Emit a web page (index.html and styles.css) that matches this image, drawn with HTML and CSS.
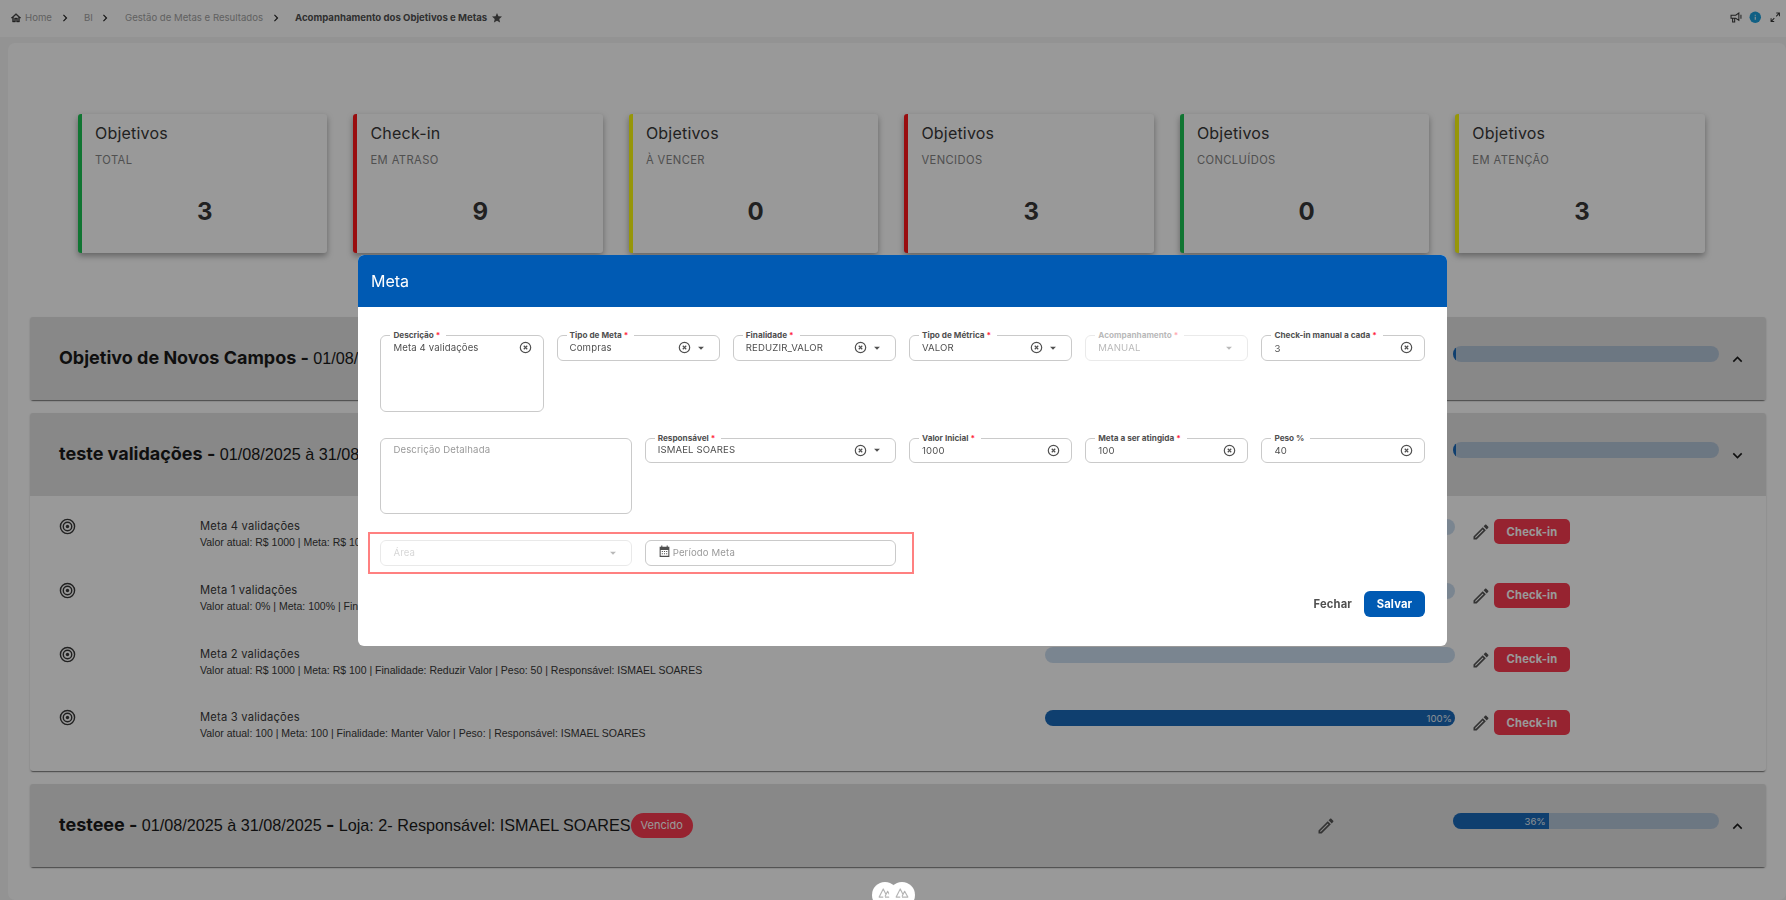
FILE: index.html
```html
<!DOCTYPE html>
<html lang="pt-BR">
<head>
  <meta charset="UTF-8">
  <meta name="viewport" content="width=device-width, initial-scale=1.0">
  <title>Acompanhamento dos Objetivos e Metas</title>
  <link rel="stylesheet" href="styles.css">
</head>
<body>
  <svg class="sprite">
    <symbol id="home" viewBox="0 0 24 24"><path d="M12 5.69L17 10.19V18H15V12H9V18H7V10.19L12 5.69M12 3L2 12H5V20H11V14H13V20H19V12H22L12 3Z" stroke="currentColor" stroke-width="0.8"/></symbol>
    <symbol id="right" viewBox="0 0 24 24"><path d="M8.59 16.58L13.17 12L8.59 7.41L10 6L16 12L10 18Z"/></symbol>
    <symbol id="up" viewBox="0 0 24 24"><path d="M7.41 15.41L12 10.83L16.59 15.41L18 14L12 8L6 14Z"/></symbol>
    <symbol id="down" viewBox="0 0 24 24"><path d="M7.41 8.58L12 13.17L16.59 8.58L18 10L12 16L6 10Z"/></symbol>
    <symbol id="star" viewBox="0 0 24 24"><path d="M12 17.27L18.18 21L16.54 13.97L22 9.24L14.81 8.62L12 2L9.19 8.62L2 9.24L7.45 13.97L5.82 21Z"/></symbol>
    <symbol id="bullhorn" viewBox="0 0 24 24"><path fill="none" stroke="currentColor" stroke-width="2" d="M2 8H11L17 4V18L11 14H2ZM5 14V21H9V14M21 7V15"/></symbol>
    <symbol id="info" viewBox="0 0 24 24"><circle cx="12" cy="12" r="11"/><path fill="#fff" d="M11 7H13V9H11ZM11 11H13V17H11Z"/></symbol>
    <symbol id="expand" viewBox="0 0 24 24"><path d="M10 21V19H6.41L10.91 14.5L9.5 13.09L5 17.59V14H3V21H10M14.5 10.91L19 6.41V10H21V3H14V5H17.59L13.09 9.5L14.5 10.91Z"/></symbol>
    <symbol id="pencil" viewBox="0 0 24 24"><path d="M14.06 9L15 9.94L5.92 19H5V18.08L14.06 9M17.66 3C17.41 3 17.15 3.1 16.96 3.29L15.13 5.12L18.88 8.87L20.71 7.04C21.1 6.65 21.1 6 20.71 5.63L18.37 3.29C18.17 3.09 17.92 3 17.66 3M14.06 6.19L3 17.25V21H6.75L17.81 9.94L14.06 6.19Z"/></symbol>
    <symbol id="target" viewBox="0 0 24 24"><g fill="none" stroke="currentColor" stroke-width="2"><circle cx="12" cy="12" r="10"/><circle cx="12" cy="12" r="6"/></g><circle cx="12" cy="12" r="2.4"/></symbol>
    <symbol id="clear" viewBox="0 0 24 24"><g fill="none" stroke="currentColor" stroke-width="2.2"><circle cx="12" cy="12" r="9.6"/><path d="M8.8 8.8L15.2 15.2M15.2 8.8L8.8 15.2"/></g></symbol>
    <symbol id="caret" viewBox="0 0 24 24"><path d="M7 10L12 15L17 10Z"/></symbol>
    <symbol id="calendar" viewBox="0 0 24 24"><path fill-rule="evenodd" d="M6 1H8V3H16V1H18V3H21V22H3V3H6ZM5 9V20H19V9ZM7 11H9V13H7ZM11 11H13V13H11ZM15 11H17V13H15ZM7 15H9V17H7ZM11 15H13V17H11ZM15 15H17V17H15Z"/></symbol>
    <symbol id="nuxt" viewBox="0 0 24 24"><path fill="none" stroke="currentColor" stroke-width="2" stroke-linejoin="round" d="M9 19H2L9 5L14 15M12 19H22L16.5 9L12 18"/></symbol>
  </svg>

  <header class="topbar">
    <nav class="breadcrumb">
      <svg class="icon home"><use href="#home"/></svg>
      <a class="crumb-home">Home</a>
      <svg class="icon sep"><use href="#right"/></svg>
      <a class="crumb-bi">BI</a>
      <svg class="icon sep"><use href="#right"/></svg>
      <a class="crumb-gestao">Gestão de Metas e Resultados</a>
      <svg class="icon sep"><use href="#right"/></svg>
      <strong>Acompanhamento dos Objetivos e Metas</strong>
      <svg class="icon star"><use href="#star"/></svg>
    </nav>
    <div class="tools">
      <svg class="icon"><use href="#bullhorn"/></svg>
      <svg class="icon info"><use href="#info"/></svg>
      <svg class="icon"><use href="#expand"/></svg>
    </div>
  </header>

  <main class="content">
    <section class="cards">
      <div class="card green"><h3>Objetivos</h3><p>TOTAL</p><b>3</b></div>
      <div class="card red"><h3>Check-in</h3><p>EM ATRASO</p><b>9</b></div>
      <div class="card yellow"><h3>Objetivos</h3><p>À VENCER</p><b>0</b></div>
      <div class="card red"><h3>Objetivos</h3><p>VENCIDOS</p><b>3</b></div>
      <div class="card green"><h3>Objetivos</h3><p>CONCLUÍDOS</p><b>0</b></div>
      <div class="card yellow"><h3>Objetivos</h3><p>EM ATENÇÃO</p><b>3</b></div>
    </section>

    <section class="panel">
      <div class="panel-header">
        <div class="panel-title"><strong>Objetivo de Novos Campos - </strong><span>01/08/2025 à 31/08/2025</span></div>
        <div class="progress"><div class="bar" style="width: 1%"></div></div>
        <svg class="icon toggle"><use href="#up"/></svg>
      </div>
    </section>

    <section class="panel">
      <div class="panel-header">
        <div class="panel-title"><strong>teste validações - </strong><span>01/08/2025 à 31/08/2025</span></div>
        <div class="progress"><div class="bar" style="width: 1%"></div></div>
        <svg class="icon toggle"><use href="#down"/></svg>
      </div>
      <div class="metas">
        <div class="meta">
          <svg class="icon target"><use href="#target"/></svg>
          <div class="meta-text"><h4>Meta 4 validações</h4><p>Valor atual: R$ 1000 | Meta: R$ 100</p></div>
          <div class="progress"></div>
          <svg class="icon pencil"><use href="#pencil"/></svg>
          <button class="checkin">Check-in</button>
        </div>
        <div class="meta">
          <svg class="icon target"><use href="#target"/></svg>
          <div class="meta-text"><h4>Meta 1 validações</h4><p>Valor atual: 0% | Meta: 100% | Finalidade</p></div>
          <div class="progress"></div>
          <svg class="icon pencil"><use href="#pencil"/></svg>
          <button class="checkin">Check-in</button>
        </div>
        <div class="meta">
          <svg class="icon target"><use href="#target"/></svg>
          <div class="meta-text"><h4>Meta 2 validações</h4><p>Valor atual: R$ 1000 | Meta: R$ 100 | Finalidade: Reduzir Valor | Peso: 50 | Responsável: ISMAEL SOARES</p></div>
          <div class="progress"></div>
          <svg class="icon pencil"><use href="#pencil"/></svg>
          <button class="checkin">Check-in</button>
        </div>
        <div class="meta">
          <svg class="icon target"><use href="#target"/></svg>
          <div class="meta-text"><h4>Meta 3 validações</h4><p>Valor atual: 100 | Meta: 100 | Finalidade: Manter Valor | Peso: | Responsável: ISMAEL SOARES</p></div>
          <div class="progress"><div class="bar" style="width: 100%">100%</div></div>
          <svg class="icon pencil"><use href="#pencil"/></svg>
          <button class="checkin">Check-in</button>
        </div>
      </div>
    </section>

    <section class="panel">
      <div class="panel-header">
        <div class="panel-title"><strong>testeee - </strong><span>01/08/2025 à 31/08/2025</span><strong> - </strong><span>Loja: 2- Responsável: ISMAEL SOARES</span></div>
        <span class="badge">Vencido</span>
        <svg class="icon pencil"><use href="#pencil"/></svg>
        <div class="progress"><div class="bar" style="width: 36%">36%</div></div>
        <svg class="icon toggle"><use href="#up"/></svg>
      </div>
    </section>
  </main>

  <div class="overlay">
    <div class="dialog">
      <div class="dialog-title">Meta</div>
      <form class="form">
        <div class="field area">
          <label>Descrição <i>*</i></label><span class="value">Meta 4 validações</span>
          <svg class="icon"><use href="#clear"/></svg>
        </div>
        <div class="field">
          <label>Tipo de Meta <i>*</i></label><span class="value">Compras</span>
          <svg class="icon"><use href="#clear"/></svg><svg class="icon caret"><use href="#caret"/></svg>
        </div>
        <div class="field">
          <label>Finalidade <i>*</i></label><span class="value">REDUZIR_VALOR</span>
          <svg class="icon"><use href="#clear"/></svg><svg class="icon caret"><use href="#caret"/></svg>
        </div>
        <div class="field">
          <label>Tipo de Métrica <i>*</i></label><span class="value">VALOR</span>
          <svg class="icon"><use href="#clear"/></svg><svg class="icon caret"><use href="#caret"/></svg>
        </div>
        <div class="field disabled">
          <label>Acompanhamento <i>*</i></label><span class="value">MANUAL</span>
          <svg class="icon caret"><use href="#caret"/></svg>
        </div>
        <div class="field number">
          <label>Check-in manual a cada <i>*</i></label><span class="value">3</span>
          <svg class="icon"><use href="#clear"/></svg>
        </div>

        <div class="field area wide second">
          <span class="value placeholder">Descrição Detalhada</span>
        </div>
        <div class="field wide second">
          <label>Responsável <i>*</i></label><span class="value">ISMAEL SOARES</span>
          <svg class="icon"><use href="#clear"/></svg><svg class="icon caret"><use href="#caret"/></svg>
        </div>
        <div class="field number second">
          <label>Valor Inicial <i>*</i></label><span class="value">1000</span>
          <svg class="icon"><use href="#clear"/></svg>
        </div>
        <div class="field number second">
          <label>Meta a ser atingida <i>*</i></label><span class="value">100</span>
          <svg class="icon"><use href="#clear"/></svg>
        </div>
        <div class="field number second">
          <label>Peso %</label><span class="value">40</span>
          <svg class="icon"><use href="#clear"/></svg>
        </div>

        <div class="field wide disabled">
          <span class="value placeholder">Área</span>
          <svg class="icon caret"><use href="#caret"/></svg>
        </div>
        <div class="field wide">
          <svg class="icon calendar"><use href="#calendar"/></svg>
          <span class="value placeholder">Período Meta</span>
        </div>
        <div class="highlight"></div>
      </form>
      <div class="actions">
        <button class="close">Fechar</button>
        <button class="save">Salvar</button>
      </div>
    </div>
  </div>

  <div class="devtools">
    <span><svg class="icon"><use href="#nuxt"/></svg></span>
    <span><svg class="icon"><use href="#nuxt"/></svg></span>
  </div>
</body>
</html>
```

FILE: styles.css
```css
* {
  box-sizing: border-box;
}

body {
  margin: 0;
  height: 900px;
  overflow: hidden;
  background: #f5f5f5;
  font-family: Inter, "Liberation Sans", sans-serif;
  color: #383838;
}

h3, h4, p {
  margin: 0;
  font-weight: 400;
}

button {
  border: none;
  font-family: inherit;
  font-weight: 700;
  letter-spacing: 0.15px;
}

.sprite {
  position: absolute;
  width: 0;
  height: 0;
}

.icon {
  width: 14px;
  height: 14px;
  fill: currentColor;
  flex: none;
}

/* top bar */
.topbar {
  display: flex;
  justify-content: space-between;
  align-items: center;
  height: 37px;
  padding: 0 5px 2px 10px;
  background: #fff;
  font-size: 9.6px;
}

.breadcrumb {
  display: flex;
  align-items: center;
}

.breadcrumb a {
  color: #a2a2a2;
}

.breadcrumb strong {
  color: #505050;
}

.breadcrumb .icon {
  width: 12px;
  height: 12px;
}

.breadcrumb .sep {
  width: 14px;
  height: 14px;
  color: #222;
}

.crumb-home {
  width: 33px;
  margin-left: 3px;
}

.crumb-bi {
  width: 14px;
  margin-left: 12px;
}

.crumb-gestao {
  width: 144px;
  margin-left: 13px;
}

.breadcrumb strong {
  width: 194px;
  margin-left: 12px;
}

.breadcrumb .star {
  margin-left: 2px;
  color: #505050;
}

.tools {
  display: flex;
  gap: 7px;
}

.tools .icon {
  width: 12.5px;
  height: 12.5px;
}

.tools .info {
  color: #1da1dc;
}

/* page */
.content {
  margin-left: 8px;
  margin-top: 6px;
  padding: 71px 20px 0 22px;
  height: 857px;
  border-radius: 7px;
  background: #fff;
}

.cards {
  display: grid;
  grid-template-columns: repeat(6, 1fr);
  gap: 26px;
  margin: 0 61.2px 64px 48px;
}

.card {
  height: 139px;
  padding: 10px 13px;
  border-left: 4px solid;
  border-radius: 3px;
  background: #fff;
  box-shadow: 0 3px 6px rgba(0, 0, 0, 0.35);
}

.card.green { border-color: #1cc454; }
.card.red { border-color: #ff1619; }
.card.yellow { border-color: #fafa10; }

.card h3 {
  font-size: 16px;
  line-height: 19px;
  letter-spacing: 0.2px;
}

.card p {
  margin-top: 9px;
  font-size: 11.2px;
  line-height: 16px;
  letter-spacing: 0.4px;
  color: #858585;
}

.card b {
  display: block;
  margin-top: 29px;
  font-size: 24px;
  line-height: 30px;
  text-align: center;
}

.panel {
  margin: 0 0 13px;
  border-radius: 3px;
  background: #fff;
  box-shadow: 0 2px 1px -1px rgba(0, 0, 0, 0.4), 0 1px 2px rgba(0, 0, 0, 0.2);
}

.panel-header {
  display: flex;
  align-items: flex-start;
  height: 83px;
  padding: 29px 19px 0 29px;
  border-radius: 3px 3px 0 0;
  background: #e3e3e3;
  color: #1a1a1a;
}

.panel-title {
  white-space: pre;
  line-height: 24px;
}

.panel-title strong {
  font-size: 18px;
}

.panel-title span {
  font: 16.2px "Liberation Sans", sans-serif;
}

.progress {
  width: 266px;
  height: 16px;
  margin-left: auto;
  border-radius: 8px;
  overflow: hidden;
  background: rgba(0, 90, 178, 0.2);
  flex: none;
}

.bar {
  height: 16px;
  padding-right: 3px;
  background: #1969b9;
  color: #e6eef6;
  font-size: 9.6px;
  line-height: 17px;
  text-align: right;
}

.toggle {
  width: 19px;
  height: 19px;
  margin: 4px 0 0 9px;
}

.badge {
  height: 25px;
  padding: 0 10px;
  border-radius: 13px;
  background: #fb3b50;
  color: #fff;
  font-size: 11px;
  line-height: 25px;
}

.pencil {
  width: 20px;
  height: 20px;
  color: #555;
}

.panel-header .pencil {
  margin: 3px 0 0 auto;
}

.panel-header .pencil + .progress {
  margin-left: 117px;
}

.metas {
  padding: 23px 0 0 29px;
  height: 275px;
}

.meta {
  display: flex;
  align-items: flex-start;
  height: 63.8px;
}

.meta .target {
  width: 17px;
  height: 17px;
  margin-top: -1px;
}

.meta-text {
  width: 845px;
  margin: -1px 0 0 124px;
}

.meta-text h4 {
  font-size: 11.2px;
  line-height: 16px;
  letter-spacing: 0.2px;
}

.meta-text p {
  font: 10.5px/16px "Liberation Sans", sans-serif;
}

.meta .progress {
  width: 410px;
  margin-left: 0;
}

.meta .pencil {
  margin: 3px 3px 0 16px;
}

.checkin {
  width: 76px;
  height: 25px;
  padding: 0;
  border-radius: 5px;
  background: #fb3b50;
  color: #fff;
  font-size: 11.2px;
}

/* dialog */
.overlay {
  position: fixed;
  inset: 0;
  display: flex;
  justify-content: center;
  align-items: center;
  padding: 1px 0 0 19px;
  background: rgba(0, 0, 0, 0.4);
}

.dialog {
  width: 1089px;
  height: 391px;
  border-radius: 6px;
  overflow: hidden;
  background: #fff;
  color: #505050;
}

.dialog-title {
  height: 52px;
  padding-left: 13px;
  background: #005ab3;
  color: #fff;
  font-size: 16px;
  line-height: 52px;
}

.form {
  position: relative;
  display: grid;
  grid-template-columns: repeat(12, 1fr);
  grid-template-rows: 103px 102px 26px;
  column-gap: 13px;
  align-items: start;
  padding: 28px 22.4px 0;
}

.field {
  position: relative;
  grid-column: span 2;
  display: flex;
  align-items: center;
  height: 26px;
  padding: 0 11px 1px 12px;
  border: 1px solid #cacaca;
  border-radius: 6px;
}

.field.wide {
  grid-column: span 3;
}

.field.second {
  height: 25px;
}

.field.area {
  height: 77px;
  padding-top: 6px;
  align-items: flex-start;
}

.field.area.second {
  height: 76px;
  padding-top: 5px;
}

.field.disabled {
  opacity: 0.4;
}

/* label sits on the border of the field */
.field label {
  position: absolute;
  top: -6px;
  left: 9px;
  padding: 0 6px 0 3px;
  background: #fff;
  font-size: 8.2px;
  font-weight: 700;
  line-height: 10px;
}

.field i {
  color: #ff1f3d;
  font-style: normal;
}

.value {
  margin-right: auto;
  font-size: 9.6px;
  line-height: 12px;
  letter-spacing: 0.13px;
}

.number .value {
  padding-top: 2px;
}

.placeholder {
  color: #9a9a9a;
}

.field .icon {
  width: 13px;
  height: 13px;
}

.field.area .icon {
  margin-top: -1px;
}

.field .caret {
  width: 14px;
  height: 14px;
  margin-left: 3px;
}

.field .calendar {
  margin: -3px 2px 0 0;
}

.highlight {
  position: absolute;
  top: 225px;
  left: 10px;
  width: 546px;
  height: 42px;
  border: 2px solid #ff8080;
}

.actions {
  display: flex;
  justify-content: flex-end;
  gap: 12px;
  padding: 25px 22px 0;
}

.actions button {
  height: 26px;
  padding: 0;
  border-radius: 6px;
  font-size: 11.2px;
}

.actions .close {
  background: none;
  color: #505050;
}

.actions .save {
  width: 61px;
  background: #005ab3;
  color: #fff;
}

/* floating badge at the bottom of the window */
.devtools {
  position: fixed;
  top: 882px;
  left: 872px;
  display: flex;
}

.devtools span {
  display: flex;
  justify-content: center;
  width: 26px;
  height: 26px;
  padding-top: 4px;
  border-radius: 13px;
  background: #fff;
  color: #b5b5b5;
}

.devtools span + span {
  margin-left: -9px;
}
```
